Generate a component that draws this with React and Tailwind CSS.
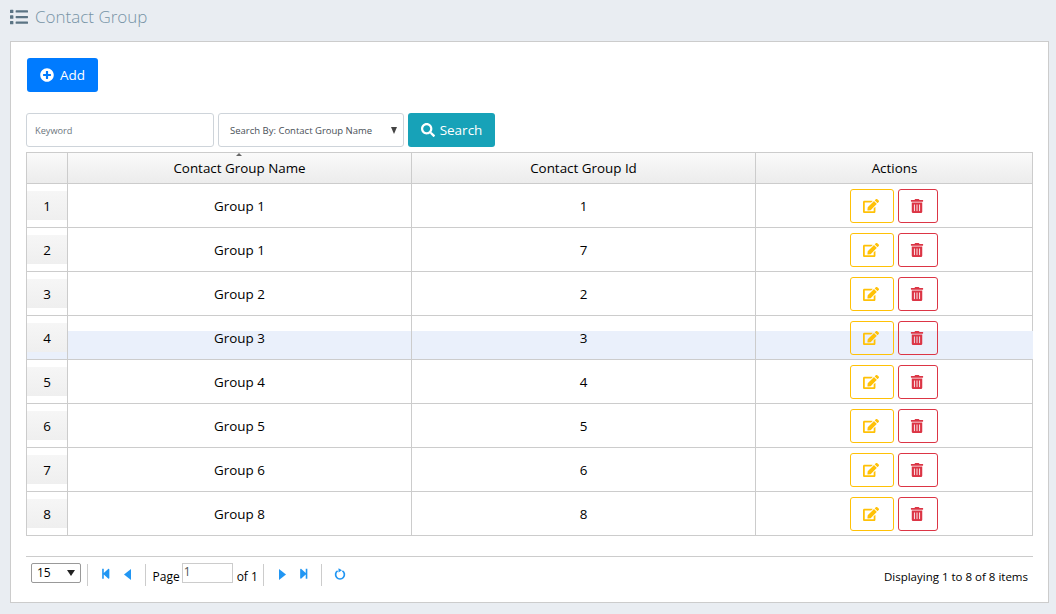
import React from "react";
import { FaList, FaPlusCircle, FaSearch, FaEdit, FaTrashAlt, FaStepBackward, FaStepForward } from "react-icons/fa";

const rows = [
  ["1", "Group 1", "1"],
  ["2", "Group 1", "7"],
  ["3", "Group 2", "2"],
  ["4", "Group 3", "3"],
  ["5", "Group 4", "4"],
  ["6", "Group 5", "5"],
  ["7", "Group 6", "6"],
  ["8", "Group 8", "8"],
];

const grid = "grid grid-cols-[41px_344px_344px_277px]";
const hiBg = "bg-[linear-gradient(to_bottom,transparent_15px,#eaf0fb_15px)]";

function Sep() {
  return <div className="w-px h-[22px] bg-[#ccc] mx-[6px] mt-[4px]" />;
}

function Tri({ left }) {
  return (
    <svg width="7" height="11" viewBox="0 0 7 11" fill="currentColor">
      <polygon points={left ? "7,0 7,11 0,5.5" : "0,0 0,11 7,5.5"} />
    </svg>
  );
}

export default function App() {
  return (
    <div className="h-[614px] w-[1056px] overflow-hidden bg-[#e9edf2] font-['Open_Sans',sans-serif] text-black">
      <div className="h-[41px] flex items-start pl-[10px] pt-[6px] gap-[7px]">
        <FaList className="text-[18px] text-[#5b7484] mt-[2px]" />
        <span className="text-[17px] leading-[22px] font-light text-[#7794a6]">Contact Group</span>
      </div>
      <div className="ml-[10px] w-[1039px] h-[562px] bg-white border border-[#ccc] px-[15px] pt-[16px]">
        <button className="ml-px w-[71px] h-[34px] rounded-[3px] bg-[#007bff] text-white text-[13.5px] flex items-center justify-center gap-[6px]">
          <FaPlusCircle className="text-[14px]" />
          Add
        </button>
        <div className="flex gap-[4px] mt-[21px] h-[34px]">
          <div className="w-[188px] border border-[#ced4da] rounded-[3px] flex items-center pl-[8px] pt-[2px] text-[9.2px] text-[#6c757d]">Keyword</div>
          <div className="w-[186px] border border-[#ced4da] rounded-[3px] flex items-center justify-between pl-[11px] pr-[6px] text-[9.5px] text-[#495057]">
            <span className="pt-[2px]">Search By: Contact Group Name</span>
            <span className="w-0 h-0 border-x-[3.5px] border-x-transparent border-t-[7px] border-t-[#444]" />
          </div>
          <button className="w-[87px] rounded-[3px] bg-[#17a2b8] text-white text-[13.5px] flex items-center justify-center gap-[5px]">
            <FaSearch className="text-[14px]" />
            Search
          </button>
        </div>

        <div className="mt-[5px] w-[1007px] border border-[#ccc] text-[13.4px]">
          <div className={`${grid} h-[31px] border-b border-[#ccc] bg-[linear-gradient(to_bottom,#fafafa,#ececec)]`}>
            <div className="border-r border-[#ccc]" />
            <div className="relative border-r border-[#ccc] flex items-center justify-center pt-px">
              Contact Group Name
              <span className="absolute top-0 left-[168px] w-0 h-0 border-x-[3px] border-x-transparent border-b-[3px] border-b-[#666]" />
            </div>
            <div className="border-r border-[#ccc] flex items-center justify-center pt-px">Contact Group Id</div>
            <div className="flex items-center justify-center pt-px">Actions</div>
          </div>
          {rows.map((r, i) => {
            const hi = i === 3 ? hiBg : "";
            const last = i === rows.length - 1;
            return (
              <div key={r[0]} className={`${grid} ${last ? "h-[43px]" : "h-[44px] border-b border-[#ccc]"}`}>
                <div className={`border-r border-[#ccc] pt-[7px] ${hi}`}>
                  <div className="h-[29px] pt-px flex items-center justify-center bg-[linear-gradient(to_bottom,#f6f6f6,#efefef)]">{r[0]}</div>
                </div>
                <div className={`border-r border-[#ccc] flex items-center justify-center pt-[2px] ${hi}`}>{r[1]}</div>
                <div className={`border-r border-[#ccc] flex items-center justify-center pt-[2px] ${hi}`}>{r[2]}</div>
                <div className={`flex items-start justify-center gap-[4px] pt-[5px] pr-[1px] ${hi}`}>
                  <button className="w-[44px] h-[34px] rounded-[3px] border border-[#ffc107] text-[#ffc107] flex items-center justify-center pr-[2px]">
                    <FaEdit className="text-[16px]" />
                  </button>
                  <button className="w-[40px] h-[34px] rounded-[3px] border border-[#dc3545] text-[#dc3545] flex items-center justify-center pr-[2px]">
                    <FaTrashAlt className="text-[14px]" />
                  </button>
                </div>
              </div>
            );
          })}
        </div>

        <div className="mt-[20px] w-[1007px] border-t border-[#ccc] flex items-center justify-between h-[33px] pl-[5px] pr-[5px] text-[12px]">
          <div className="flex items-center">
            <div className="w-[50px] h-[20px] border border-[#999] rounded-[2px] flex items-center justify-between pl-[5px] pr-[5px]">
              <span>15</span>
              <span className="w-0 h-0 border-x-[4px] border-x-transparent border-t-[6px] border-t-[#222]" />
            </div>
            <Sep />
            <div className="flex items-center text-[#2196f3] ml-[6px] mr-[8px] mt-[2px] gap-[12px]">
              <FaStepBackward className="text-[11.5px]" />
              <Tri left />
            </div>
            <Sep />
            <span className="ml-[1px] mt-[8px]">Page</span>
            <div className="ml-[2px] w-[51px] h-[20px] border border-[#ccc] pl-px leading-[16px] text-[#555]">1</div>
            <span className="ml-[4px] -mr-px mt-[8px]">of 1</span>
            <Sep />
            <div className="flex items-center text-[#2196f3] ml-[9px] mr-[6px] mt-[2px] gap-[12px]">
              <Tri />
              <FaStepForward className="text-[11.5px]" />
            </div>
            <Sep />
            <svg className="ml-[6px] mt-[2px] text-[#2196f3]" width="12" height="12" viewBox="0 0 12 12" fill="none" stroke="currentColor">
              <path d="M3.6 2.9 A4.4 4.4 0 1 0 8.4 2.9" strokeWidth="1.7" />
              <polygon points="4.5,0.2 8,2.2 4.5,4.6" fill="currentColor" stroke="none" />
            </svg>
          </div>
          <span className="text-[11.5px] mt-[8px]">Displaying 1 to 8 of 8 items</span>
        </div>
      </div>
    </div>
  );
}
